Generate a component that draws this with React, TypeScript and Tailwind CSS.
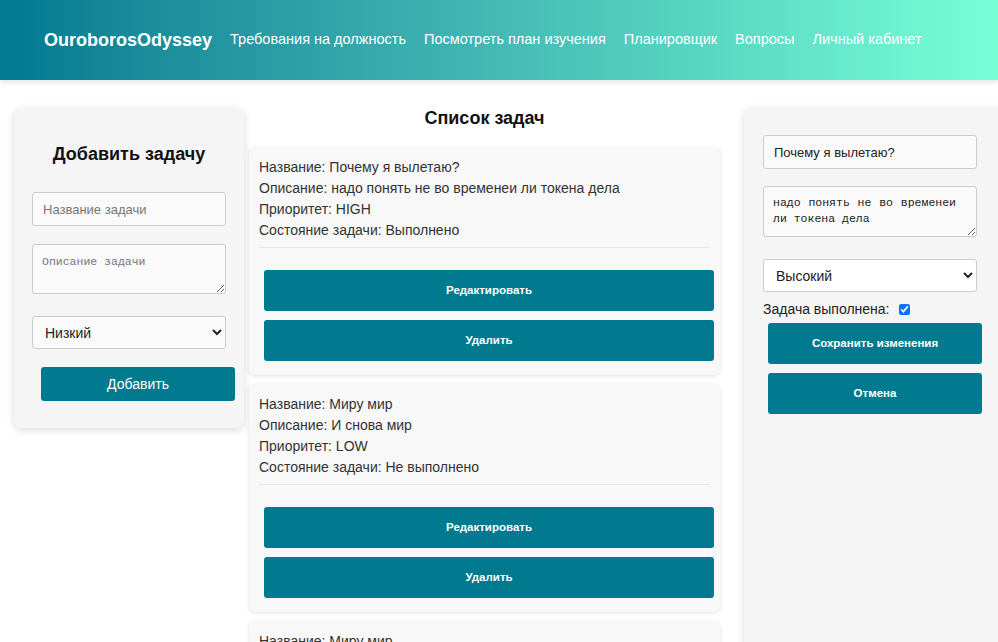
import React from "react"

const tasks = [
  { name: "Почему я вылетаю?", desc: "надо понять не во временеи ли токена дела", priority: "HIGH", done: "Выполнено" },
  { name: "Миру мир", desc: "И снова мир", priority: "LOW", done: "Не выполнено" },
  { name: "Миру мир", desc: "И снова мир", priority: "LOW", done: "Не выполнено" },
]

const nav = ["Требования на должность", "Посмотреть план изучения", "Планировщик", "Вопросы", "Личный кабинет"]

function TaskCard({ task }: { task: (typeof tasks)[number] }) {
  return (
    <div className="rounded-md bg-[#f8f8f8] pt-[10px] pl-[10px] pr-[10px] pb-[14px] shadow-[0_1px_4px_rgba(0,0,0,0.12)]">
      <div className="text-[14px] leading-[21px] text-[#333]">
        <p>Название: {task.name}</p>
        <p>Описание: {task.desc}</p>
        <p>Приоритет: {task.priority}</p>
        <p>Состояние задачи: {task.done}</p>
      </div>
      <div className="mt-[6px] h-px bg-[#e6e6e6]" />
      <div className="mt-[22px] flex flex-col gap-[9px] pl-[5px]">
        <button className="h-[41px] w-[450px] rounded-[3px] bg-[#017a8f] text-[11.5px] font-bold text-white">Редактировать</button>
        <button className="h-[41px] w-[450px] rounded-[3px] bg-[#017a8f] text-[11.5px] font-bold text-white">Удалить</button>
      </div>
    </div>
  )
}

export default function App() {
  return (
    <div className="h-[642px] w-[998px] overflow-hidden bg-white font-['Liberation_Sans',Arial,sans-serif]">
      <header className="flex h-[80px] items-center gap-[18px] bg-gradient-to-r from-[#007991] to-[#78ffd6] pl-[44px] shadow-[0_2px_6px_rgba(0,0,0,0.12)]">
        <span className="text-[18px] font-bold text-white">OuroborosOdyssey</span>
        {nav.map((n) => (
          <a key={n} className="text-[14.5px] text-white">{n}</a>
        ))}
      </header>

      <div className="flex items-start pt-[28px]">
        {/* add task */}
        <div className="ml-[14px] w-[230px] shrink-0 rounded-lg bg-[#f5f5f5] px-[18px] pt-[35px] pb-[27px] shadow-[0_2px_8px_rgba(0,0,0,0.15)]">
          <h2 className="text-center text-[18px] font-bold leading-[22px] text-[#111]">Добавить задачу</h2>
          <input
            placeholder="Название задачи"
            className="mt-[27px] h-[34px] w-full rounded-[3px] border border-[#ccc] bg-[#fafafa] px-[10px] text-[13px] placeholder:text-[#777] outline-none"
          />
          <textarea
            placeholder="Описание задачи"
            className="mt-[18px] block h-[50px] w-full rounded-[3px] border border-[#ccc] bg-[#fafafa] px-[9px] pt-[8px] font-['Liberation_Mono',monospace] text-[11.5px] placeholder:text-[#777] outline-none"
          />
          <select className="mt-[22px] h-[33px] w-full rounded-[3px] border border-[#ccc] bg-[#fafafa] px-[8px] text-[14px] text-[#222]">
            <option>Низкий</option>
          </select>
          <button className="mt-[18px] ml-[9px] h-[34px] w-[194px] rounded-[3px] bg-[#017a8f] text-[14px] text-white">Добавить</button>
        </div>

        {/* task list */}
        <div className="ml-[5px] flex w-[471px] shrink-0 flex-col">
          <h2 className="text-center text-[18px] font-bold leading-[20px] text-[#111]">Список задач</h2>
          <div className="mt-[19px] flex flex-col gap-[9px]">
            {tasks.map((t, i) => (
              <TaskCard key={i} task={t} />
            ))}
          </div>
        </div>

        {/* edit task */}
        <div className="ml-[24px] h-[560px] w-[262px] shrink-0 rounded-lg bg-[#f5f5f5] pl-[19px] pt-[27px] shadow-[0_2px_8px_rgba(0,0,0,0.15)]">
          <input
            defaultValue="Почему я вылетаю?"
            className="h-[34px] w-[214px] rounded-[3px] border border-[#ccc] bg-[#fafafa] px-[10px] text-[13px] text-[#222] outline-none"
          />
          <textarea
            defaultValue="надо понять не во временеи ли токена дела"
            className="mt-[17px] block h-[51px] w-[214px] rounded-[3px] border border-[#ccc] bg-[#fafafa] pl-[9px] pr-[20px] pt-[8px] text-justify font-['Liberation_Mono',monospace] text-[11.5px] leading-[16px] text-[#222] outline-none"
          />
          <select className="mt-[22px] h-[33px] w-[214px] rounded-[3px] border border-[#ccc] bg-white px-[8px] text-[14px] text-[#222]">
            <option>Высокий</option>
          </select>
          <label className="mt-[7px] flex items-center text-[14px] text-[#222]">
            Задача выполнена:
            <input type="checkbox" defaultChecked className="ml-[9px] h-[11px] w-[11px] accent-[#0075ff]" />
          </label>
          <div className="mt-[3px] flex flex-col gap-[9px] pl-[5px]">
            <button className="h-[41px] w-[214px] rounded-[3px] bg-[#017a8f] text-[11.5px] font-bold text-white">Сохранить изменения</button>
            <button className="h-[41px] w-[214px] rounded-[3px] bg-[#017a8f] text-[11.5px] font-bold text-white">Отмена</button>
          </div>
        </div>
      </div>
    </div>
  )
}
